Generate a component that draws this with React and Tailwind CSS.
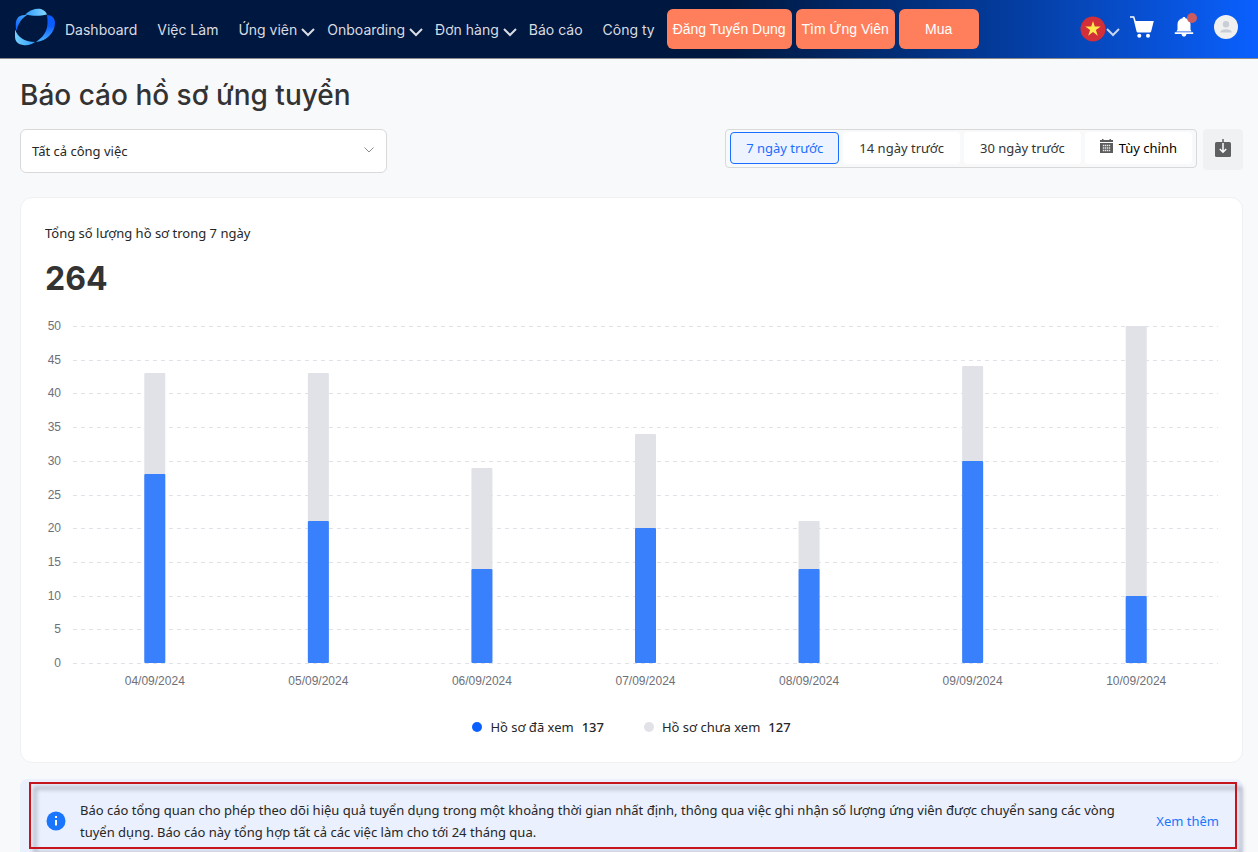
import React, { useState } from 'react';

const NAV_ITEMS = [
    { label: 'Dashboard' },
    { label: 'Việc Làm' },
    { label: 'Ứng viên', menu: true },
    { label: 'Onboarding', menu: true },
    { label: 'Đơn hàng', menu: true },
    { label: 'Báo cáo' },
    { label: 'Công ty' },
];

const RANGES = ['7 ngày trước', '14 ngày trước', '30 ngày trước'];

const DATA = [
    { date: '04/09/2024', viewed: 28, total: 43 },
    { date: '05/09/2024', viewed: 21, total: 43 },
    { date: '06/09/2024', viewed: 14, total: 29 },
    { date: '07/09/2024', viewed: 20, total: 34 },
    { date: '08/09/2024', viewed: 14, total: 21 },
    { date: '09/09/2024', viewed: 30, total: 44 },
    { date: '10/09/2024', viewed: 10, total: 50 },
];

const TICKS = [0, 5, 10, 15, 20, 25, 30, 35, 40, 45, 50];
const PLOT_HEIGHT = 337;
const MAX_VALUE = 50;
const BAR_WIDTH = 21;

const yFor = (value) => Math.round(PLOT_HEIGHT - (value / MAX_VALUE) * PLOT_HEIGHT);

function Logo() {
    return (
        <svg viewBox="0 0 40 38" className="w-10 h-[38px]" aria-hidden="true">
            <defs>
                <linearGradient id="logo-top" x1="0" x2="1">
                    <stop offset="0" stopColor="#2f9bff" />
                    <stop offset="1" stopColor="#86d8ff" />
                </linearGradient>
                <linearGradient id="logo-right" x1="0" y1="0" x2="0" y2="1">
                    <stop offset="0.4" stopColor="#0a5cff" />
                    <stop offset="1" stopColor="#4cb4ff" />
                </linearGradient>
                <linearGradient id="logo-bottom" x1="0" x2="1">
                    <stop offset="0" stopColor="#74d0ff" />
                    <stop offset="1" stopColor="#2f9bff" />
                </linearGradient>
                <linearGradient id="logo-left" x1="0" y1="1" x2="1" y2="0">
                    <stop offset="0" stopColor="#0a5cff" />
                    <stop offset="1" stopColor="#4ab0ff" />
                </linearGradient>
            </defs>
            <path fill="url(#logo-top)" d="M10 6.500C15 2 21 0 26 1c3 1 5 3 6 5.500C25 8 20 8.500 10 6.500Z" />
            <path fill="url(#logo-right)" d="M32 7c5 0 8 3 8 8 0 9-8 18-19 19 10-7 13-14 11-27Z" />
            <path fill="url(#logo-bottom)" d="M0 21.500c3 8 9 12 20 12.500-3 2-7 4-12 3C2 36 0 33 0 28Z" />
            <path fill="url(#logo-left)" d="M1 21C0 12 2 7 10 7h2C6 11 4 15 2 21l-1 2Z" />
        </svg>
    );
}

function Chevron({ className }) {
    return (
        <svg viewBox="0 0 14 9" className={className} fill="none" stroke="currentColor" aria-hidden="true">
            <path strokeWidth="2" d="M1 1l6 6 6-6" />
        </svg>
    );
}

function Header() {
    return (
        <header className="flex items-center h-[59px] pl-[15px] pr-5 border-b border-[#8a8a8a] font-['Inter',sans-serif] bg-linear-to-r from-[#001840] from-58% via-[#0645b5] via-85% to-[#0a60ff]">
            <a href="#home" aria-label="Trang chủ" className="shrink-0 -mt-1">
                <Logo />
            </a>
            <nav className="flex items-center shrink-0 pt-0.5">
                {NAV_ITEMS.map(({ label, menu }) => (
                    <a
                        key={label}
                        href="#nav"
                        className={`flex items-center gap-1 pl-2.5 text-sm text-[#d9dce2] whitespace-nowrap ${menu ? 'pr-0.5' : 'pr-2.5'}`}
                    >
                        {label}
                        {menu && <Chevron className="w-3.5 h-[9px] mt-1" />}
                    </a>
                ))}
            </nav>
            <div className="flex items-center gap-1 ml-0.5 shrink-0 text-sm text-white font-['Liberation_Sans',sans-serif]">
                <button className="h-10 px-1.5 rounded-md bg-[#ff7f5c]">Đăng Tuyển Dụng</button>
                <button className="h-10 px-1.5 rounded-md bg-[#ff7f5c]">Tìm Ứng Viên</button>
                <button className="h-10 w-20 rounded-md bg-[#ff7f5c]">Mua</button>
            </div>
            <div className="flex items-center ml-auto shrink-0 text-white">
                <button className="flex items-center" aria-label="Ngôn ngữ">
                    <svg viewBox="0 0 26 26" className="w-[26px] h-[26px]" aria-hidden="true">
                        <circle cx="13" cy="13" r="12.5" fill="#d22f38" />
                        <path fill="#ffe94b" d="M13 5l1.800 5.600h5.900l-4.800 3.400 1.900 5.700-4.800-3.600-4.800 3.600 1.900-5.700-4.800-3.400h5.900Z" />
                    </svg>
                    <Chevron className="w-3.5 h-[9px] mt-1.5 text-[#c8d6f2]" />
                </button>
                <button className="ml-2.5 mb-1" aria-label="Giỏ hàng">
                    <svg viewBox="0 0 24 22" className="w-6 h-[22px]" fill="currentColor" aria-hidden="true">
                        <path d="M0 .2h4.200l1.500 4.800h18.100l-2.600 10.300c-.2.800-.8 1.200-1.600 1.200H8.200c-.9 0-1.500-.5-1.700-1.300L3.200 1.800H0Z" />
                        <circle cx="9.300" cy="19.700" r="2" />
                        <circle cx="18" cy="19.700" r="2" />
                    </svg>
                </button>
                <button className="relative ml-5" aria-label="Thông báo">
                    <svg viewBox="0 0 20 20" className="w-5 h-5 -mt-1" fill="currentColor" aria-hidden="true">
                        <path d="M10 0c.8 0 1.400.5 1.500 1.300 3.300.7 5 3.200 5 6.200v5l1 2H2.500l1-2v-5c0-3 1.700-5.500 5-6.200C8.600.5 9.200 0 10 0Z" />
                        <path d="M.8 15.300h18.400v1.700H.8ZM7.600 17h4.800c0 1.500-1 2.600-2.400 2.600S7.600 18.500 7.600 17Z" />
                    </svg>
                    <span className="absolute -top-2 -right-[3px] w-2.5 h-2.5 rounded-full bg-[#cc5b5e]" />
                </button>
                <button className="ml-5 mb-1" aria-label="Tài khoản">
                    <svg viewBox="0 0 24 24" className="w-6 h-6" aria-hidden="true">
                        <circle cx="12" cy="12" r="12" fill="#f0f0f1" />
                        <circle cx="12" cy="9.300" r="3.200" fill="#c9cdd5" />
                        <path fill="#c9cdd5" d="M6 17.500c.5-2.300 3-3.200 6-3.200s5.500.9 6 3.200Z" />
                    </svg>
                </button>
            </div>
        </header>
    );
}

function Toolbar() {
    const [range, setRange] = useState(RANGES[0]);

    return (
        <div className="flex items-start mt-3">
            <div className="relative w-[30%]">
                <select
                    aria-label="Công việc"
                    className="w-full h-11 pl-[11px] pr-8 appearance-none rounded-md border border-[#d9d9d9] bg-white text-[#262626]"
                >
                    <option>Tất cả công việc</option>
                </select>
                <svg viewBox="0 0 10 6" className="absolute right-[13px] top-[18px] w-2.5 h-1.5 pointer-events-none" fill="none" stroke="#8c8c8c" aria-hidden="true">
                    <path d="M.5.5L5 5 9.500.5" />
                </svg>
            </div>
            <div className="flex items-start gap-1 h-[39px] px-1 pt-0.5 ml-auto rounded border border-[#d9d9d9]">
                {RANGES.map((label) => (
                    <button
                        key={label}
                        onClick={() => setRange(label)}
                        className={`h-8 px-[15px] rounded border ${
                            range === label ? 'border-[#1a6dff] bg-[#edf4ff] text-[#1a6dff]' : 'border-transparent bg-white text-[#333]'
                        }`}
                    >
                        {label}
                    </button>
                ))}
                <button className="flex items-center gap-1.5 h-8 px-[15px] rounded bg-white text-black">
                    <svg viewBox="0 0 13 14" className="w-[13px] h-3.5 -mt-1" aria-hidden="true">
                        <path fill="#5c5c5c" d="M2 0h1.500v1h6V0H11v1h2v2H0V1h2ZM0 4h13v10H0Z" />
                        <path stroke="#e8e8e8" strokeWidth="1.400" strokeDasharray="1.400 .6" d="M2.800 6.500h7.500M2.800 9h7.500M2.800 11.500h7.500" />
                    </svg>
                    Tùy chỉnh
                </button>
            </div>
            <button aria-label="Tải xuống" className="flex items-center justify-center w-10 h-[41px] ml-1.5 rounded bg-[#f0f1f3]">
                <svg viewBox="0 0 16 18" className="w-4 h-[18px] -mt-1" aria-hidden="true">
                    <rect y="3" width="16" height="15" rx="1.500" fill="#5f6062" />
                    <path stroke="#5f6062" strokeWidth="1.500" d="M8 0v4" />
                    <path fill="none" stroke="#fff" strokeWidth="1.500" d="M8 4v9M4.800 10L8 13.200 11.200 10" />
                </svg>
            </button>
        </div>
    );
}

function Chart() {
    return (
        <div className="pl-7 pt-6 pb-9">
            <svg className="block w-full h-[337px] overflow-visible font-['Liberation_Sans',sans-serif] text-xs" role="img" aria-label="Số lượng hồ sơ theo ngày">
                {TICKS.map((tick) => (
                    <g key={tick}>
                        <line x1="0" x2="100%" y1={yFor(tick) + 0.5} y2={yFor(tick) + 0.5} stroke="#e0e2e8" strokeDasharray="4 4" />
                        <text x="-12" y={yFor(tick) + 4} textAnchor="end" fill="#6e7079">{tick}</text>
                    </g>
                ))}
                {DATA.map(({ date, viewed, total }, i) => {
                    const center = `${((i + 0.5) / DATA.length) * 100}%`;
                    return (
                        <g key={date}>
                            <g transform={`translate(${-BAR_WIDTH / 2} 0)`}>
                                <rect x={center} y={yFor(total)} width={BAR_WIDTH} height={PLOT_HEIGHT - yFor(total)} rx="1" fill="#e1e2e8" />
                                <rect x={center} y={yFor(viewed)} width={BAR_WIDTH} height={PLOT_HEIGHT - yFor(viewed)} rx="1" fill="#3880fc" />
                            </g>
                            <text x={center} y={PLOT_HEIGHT + 22} textAnchor="middle" fill="#6e7079">{date}</text>
                        </g>
                    );
                })}
            </svg>
        </div>
    );
}

function Legend({ color, label, value }) {
    return (
        <div className="flex items-center gap-2">
            <span className={`w-2.5 h-2.5 rounded-full ${color}`} />
            <span>{label}</span>
            <span className="font-medium">{value}</span>
        </div>
    );
}

export default function App() {
    return (
        <div className="min-h-screen bg-[#f8f9fb] text-[13px] leading-[22px] text-[#262626] font-['Noto_Sans',sans-serif]">
            <Header />
            <main className="pl-5 pr-[15px]">
                <h1 className="pt-3.5 text-[28px] leading-[44px] font-medium text-[#333] font-['Inter',sans-serif]">Báo cáo hồ sơ ứng tuyển</h1>
                <Toolbar />

                <section className="mt-6 p-6 rounded-xl border border-[#f0f0f0] bg-white">
                    <h2>Tổng số lượng hồ sơ trong 7 ngày</h2>
                    <p className="mt-3 text-[32px] leading-[46px] font-bold text-[#333] font-['Inter',sans-serif]">264</p>
                    <Chart />
                    <div className="flex justify-center gap-10 mt-[17px]">
                        <Legend color="bg-[#0a60ff]" label="Hồ sơ đã xem" value={137} />
                        <Legend color="bg-[#e1e2e8]" label="Hồ sơ chưa xem" value={127} />
                    </div>
                </section>

                <div className="relative flex items-center mt-4 py-5 pl-[26px] pr-6 rounded-lg bg-[#eaf0fd]">
                    <svg viewBox="0 0 20 20" className="w-5 h-5 shrink-0" aria-hidden="true">
                        <circle cx="10" cy="10" r="9.500" fill="#1a75ff" />
                        <path stroke="#fff" strokeWidth="2" d="M10 9v5.500M10 5v2" />
                    </svg>
                    <p className="flex-1 ml-3.5 mr-5">
                        Báo cáo tổng quan cho phép theo dõi hiệu quả tuyển dụng trong một khoảng thời gian nhất định, thông qua việc ghi nhận số lượng ứng viên được chuyển sang các vòng tuyển dụng. Báo cáo này tổng hợp tất cả các việc làm cho tới 24 tháng qua.
                    </p>
                    <a href="#more" className="shrink-0 text-[#1a75ff]">Xem thêm</a>
                    {/* Highlight frame */}
                    <div className="absolute top-[3px] left-[9px] right-1.5 h-[67px] border-2 border-[#c4161c] pointer-events-none drop-shadow-[5px_5px_2px_rgba(60,65,80,0.5)]" />
                </div>
            </main>
        </div>
    );
}
